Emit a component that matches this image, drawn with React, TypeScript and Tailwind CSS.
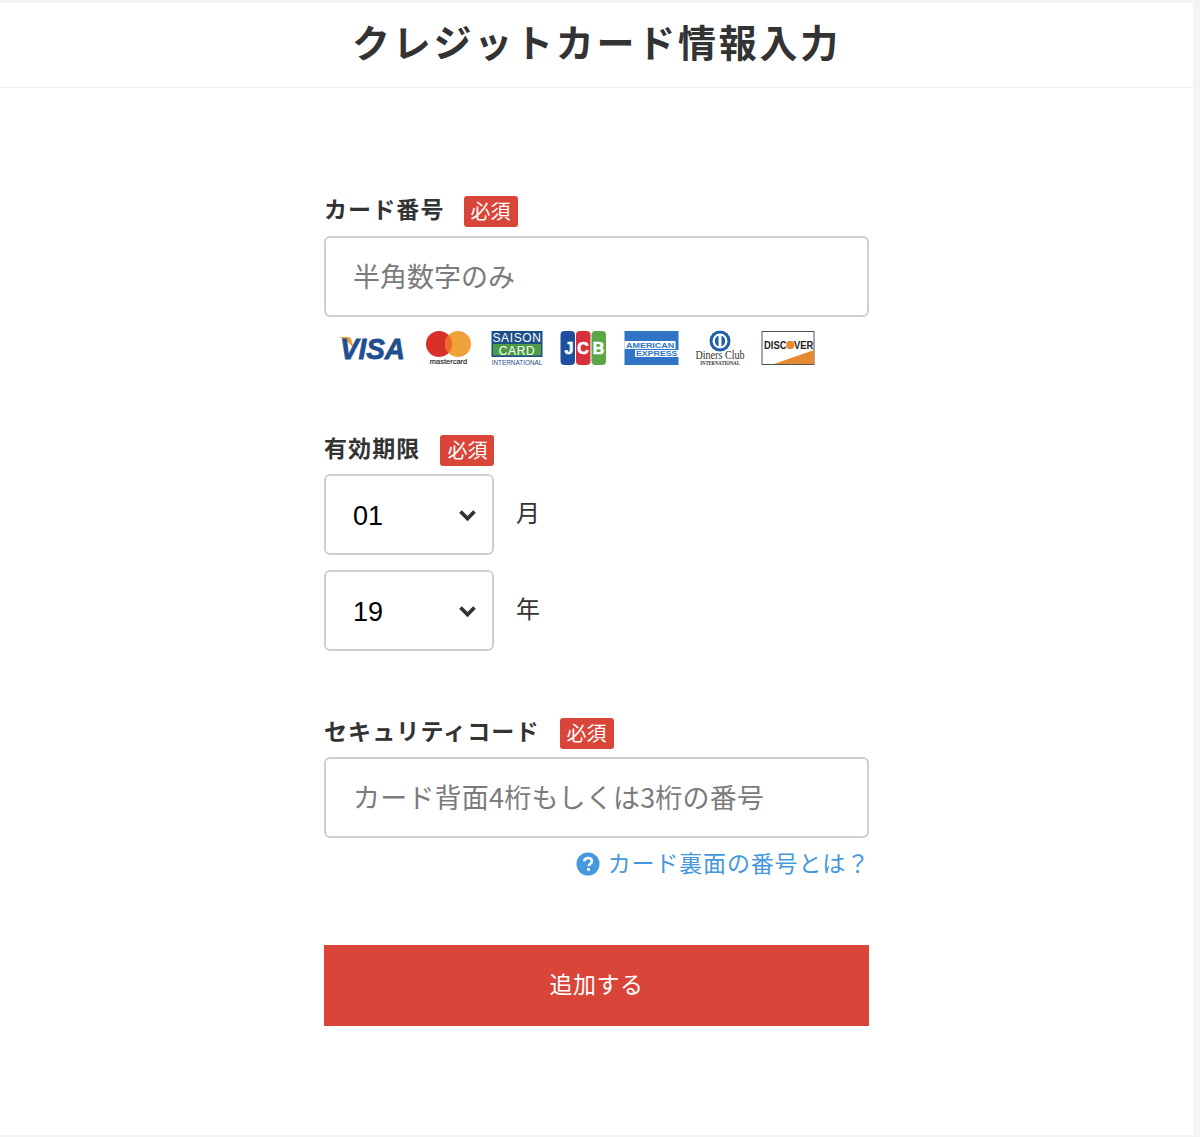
const jp = { fontFamily: '"Noto Sans CJK JP", sans-serif' };

function Badge() {
  return (
    <span className="flex h-[31px] w-[54px] items-center justify-center rounded-[3px] bg-[#d94539] pb-[1px] text-[20px] leading-none text-white">
      必須
    </span>
  );
}

function Label({ text, gap }: { text: string; gap: string }) {
  return (
    <div className={`flex h-[31px] items-center ${gap}`}>
      <span className="mb-[6px] text-[23px] font-bold leading-none tracking-[1.1px] text-[#333]">{text}</span>
      <Badge />
    </div>
  );
}

function Field({ placeholder, className }: { placeholder: string; className: string }) {
  return (
    <input
      readOnly
      placeholder={placeholder}
      className={`h-[81px] w-full rounded-[6px] border-2 border-[#cfcfcf] bg-white pl-[27px] pr-[20px] text-[27px] text-[#333] outline-none placeholder:text-[#7b7b7b] ${className}`}
      style={jp}
    />
  );
}

function Select({ value, unit }: { value: string; unit: string }) {
  return (
    <div className="flex items-center">
      <div className="flex h-[81px] w-[170px] items-center justify-between rounded-[6px] border-2 border-[#cfcfcf] bg-white pl-[27px] pr-[15px]">
        <span className="mt-[3px] font-['Liberation_Sans',sans-serif] text-[27px] leading-none text-black">{value}</span>
        <svg className="mt-[2px]" width="19" height="13" viewBox="0 0 19 13">
          <path d="M2.500 2.500 9.500 9.500l7-7" fill="none" stroke="#333" strokeWidth="3.800" />
        </svg>
      </div>
      <span className="mb-[6px] ml-[22px] text-[24px] leading-none text-[#333]">{unit}</span>
    </div>
  );
}

function CardLogos() {
  return (
    <div className="mt-[13px] flex h-[36px] items-center pl-[12px]">
      <svg width="70" height="36" viewBox="0 -4 70 36">
        <path d="M3 3h9c2 0 3 1 3.500 3l2.500 9C14 9 9 5.500 3 3z" fill="#e9a13b" />
        <text transform="translate(69 25) scale(0.93 1)" textAnchor="end" fontFamily="Liberation Sans" fontSize="30" fontWeight="700" fontStyle="italic" fill="#1f4f8f" stroke="#1f4f8f" strokeWidth="0.8">VISA</text>
      </svg>
      <svg className="ml-[20px]" width="46" height="36" viewBox="0 0 46 36">
        <circle cx="13" cy="14" r="13" fill="#d9302a" />
        <circle cx="32" cy="14" r="13" fill="#efa23a" />
        <path d="M22.500 5.100a13 13 0 0 1 0 17.800 13 13 0 0 1 0-17.800z" fill="#f0682c" />
        <text x="22.500" y="34" textAnchor="middle" fontFamily="Liberation Sans" fontSize="7.500" fill="#222" stroke="#222" strokeWidth="0.15">mastercard</text>
      </svg>
      <svg className="ml-[19px]" width="52" height="36" viewBox="0 0 52 36">
        <rect x="0.500" y="1" width="51" height="26" fill="#1c4f88" />
        <rect x="2" y="14" width="48" height="11.500" fill="#4c9c45" />
        <text x="26" y="12" textAnchor="middle" fontFamily="Liberation Sans" fontSize="12" letterSpacing="0.6" fill="#fff">SAISON</text>
        <text x="26" y="24.500" textAnchor="middle" fontFamily="Liberation Sans" fontSize="12" letterSpacing="0.6" fill="#fff">CARD</text>
        <text transform="translate(26 34.500) scale(0.8 1)" textAnchor="middle" fontFamily="Liberation Sans" fontSize="8" fill="#1c4f88">INTERNATIONAL</text>
      </svg>
      <svg className="ml-[17px]" width="47" height="36" viewBox="0 0 47 36">
        <rect x="0.500" y="1" width="14.500" height="34" rx="4" fill="#1d4f9c" />
        <rect x="16" y="1" width="14.500" height="34" rx="4" fill="#d6313a" />
        <rect x="31.500" y="1" width="14.500" height="34" rx="4" fill="#5aa845" />
        <text x="9" y="23.500" textAnchor="middle" fontFamily="Liberation Sans" fontSize="16" fontWeight="700" fill="#fff" stroke="#fff" strokeWidth="0.6">J</text>
        <text x="23" y="23.500" textAnchor="middle" fontFamily="Liberation Sans" fontSize="16" fontWeight="700" fill="#fff" stroke="#fff" strokeWidth="0.6">C</text>
        <text x="38.500" y="23.500" textAnchor="middle" fontFamily="Liberation Sans" fontSize="16" fontWeight="700" fill="#fff" stroke="#fff" strokeWidth="0.6">B</text>
      </svg>
      <svg className="ml-[17px]" width="55" height="36" viewBox="0 0 55 36">
        <rect x="0.500" y="1" width="54" height="34" fill="#2f74c6" />
        <rect x="0.500" y="11" width="51" height="8" fill="#fff" />
        <rect x="11" y="20" width="44" height="7" fill="#fff" />
        <text transform="translate(2 18) scale(1.12 1)" fontFamily="Liberation Sans" fontSize="8" fontWeight="700" fill="#2f74c6">AMERICAN</text>
        <text transform="translate(12 26) scale(1.1 1)" fontFamily="Liberation Sans" fontSize="8" fontWeight="700" fill="#2f74c6">EXPRESS</text>
      </svg>
      <svg className="ml-[16px]" width="50" height="36" viewBox="0 0 50 36">
        <circle cx="25" cy="11" r="10.500" fill="#1f5fa8" />
        <circle cx="25" cy="11" r="7.500" fill="#fff" />
        <path d="M23.500 5.500a6 6 0 0 0 0 11zM26.500 5.500a6 6 0 0 1 0 11z" fill="#1f5fa8" />
        <text transform="translate(25 28.500) scale(0.88 1)" textAnchor="middle" fontFamily="Liberation Serif" fontSize="11.500" fill="#333">Diners Club</text>
        <text transform="translate(25 35) scale(0.85 1)" textAnchor="middle" fontFamily="Liberation Serif" fontSize="5.500" fontWeight="700" fill="#333">INTERNATIONAL</text>
      </svg>
      <svg className="ml-[16px]" width="55" height="36" viewBox="0 0 55 36">
        <rect x="1" y="1.500" width="52" height="33" fill="#fff" stroke="#555" strokeWidth="1" />
        <path d="M13 34 53 20v14z" fill="#e58a2e" />
        <text transform="translate(3 19) scale(0.86 1)" fontFamily="Liberation Sans" fontSize="11" fontWeight="700" fill="#222">DISCOVER</text>
        <circle cx="29.500" cy="15" r="4" fill="#ee8a2c" />
      </svg>
    </div>
  );
}

export default function App() {
  return (
    <div className="h-[1137px] bg-[#f4f4f4] pb-[2px] pr-[7px] pt-[3px]" style={jp}>
      <div className="h-full bg-white">
        <header className="flex h-[85px] items-center justify-center border-b border-[#efefef]">
          <h1 className="mb-[8px] text-[38px] font-bold leading-none tracking-[2.75px] text-[#333]">
            クレジットカード情報入力
          </h1>
        </header>

        <main className="mx-auto w-[545px] pt-[108px]">
          <Label text="カード番号" gap="gap-[19px]" />
          <div className="mt-[9px]">
            <Field placeholder="半角数字のみ" className="pb-[3px]" />
          </div>
          <CardLogos />

          <div className="mt-[69px]">
            <Label text="有効期限" gap="gap-[20px]" />
          </div>
          <div className="mt-[8px] flex flex-col gap-[15px]">
            <Select value="01" unit="月" />
            <Select value="19" unit="年" />
          </div>

          <div className="mt-[67px]">
            <Label text="セキュリティコード" gap="gap-[20px]" />
          </div>
          <div className="mt-[8px]">
            <Field placeholder="カード背面4桁もしくは3桁の番号" className="pb-[2px] tracking-[0.2px]" />
          </div>
          <div className="mr-[-1px] mt-[11px] flex h-[30px] items-center justify-end gap-[8px] text-[#4598dd]">
            <svg width="24" height="24" viewBox="0 0 24 24">
              <circle cx="12" cy="12" r="11.500" fill="#4598dd" />
              <path d="M8.200 9.400c.2-2.200 1.800-3.400 3.900-3.400 2.200 0 3.800 1.300 3.800 3.200 0 2.600-3.300 2.800-3.300 5" fill="none" stroke="#fff" strokeWidth="2.600" />
              <rect x="11.100" y="16" width="2.800" height="2.800" fill="#fff" />
            </svg>
            <span className="mb-[4px] text-[23px] leading-none tracking-[0.85px]">カード裏面の番号とは？</span>
          </div>

          <button className="mt-[66px] flex h-[81px] w-full items-center justify-center bg-[#d94539] pb-[4px] text-[23px] tracking-[0.5px] text-white">
            追加する
          </button>
        </main>
      </div>
    </div>
  );
}
